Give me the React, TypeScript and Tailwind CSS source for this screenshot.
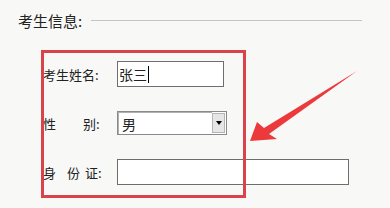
import React from "react";

export default function App() {
  const font = { fontFamily: '"Noto Sans CJK SC", "Noto Sans", sans-serif' };
  return (
    <div
      className="relative w-[390px] h-[208px] overflow-hidden bg-[#f8f8f6] text-[#222]"
      style={font}
    >
      {/* header */}
      <div className="flex items-center h-[40px] pl-[18px] pr-[28px]">
        <span className="text-[15px] leading-none">考生信息:</span>
        <div className="flex-1 h-px bg-[#c4c4c4] ml-[9px]" />
      </div>

      {/* form */}
      <div className="flex flex-col gap-[23px] mt-[21px] pl-[43px] text-[13px]">
        <div className="flex items-center h-[26px]">
          <span className="w-[74px] leading-none">考生姓名:</span>
          <div className="w-[107px] h-[26px] border border-[#6e6e6e] bg-white flex items-center pl-[1px] text-[14px] leading-none">
            张三<span className="w-px h-[17px] bg-black ml-[1px]" />
          </div>
        </div>
        <div className="flex items-center h-[26px]">
          <span className="w-[74px] flex leading-none">
            <span>性</span>
            <span className="ml-[27px]">别:</span>
          </span>
          <div className="w-[110px] h-[24px] border border-[#8a8a8a] bg-white flex items-stretch">
            <div className="flex-1 flex items-center pl-[3px] border-t border-l border-[#b0b0b0] text-[14px] leading-none">男</div>
            <div className="w-[13px] my-[1px] mr-[1px] bg-[#e6e6e6] border border-[#b5b5b5] flex items-center justify-center">
              <div className="w-0 h-0 border-l-[3px] border-r-[3px] border-t-[4px] border-l-transparent border-r-transparent border-t-black" />
            </div>
          </div>
        </div>
        <div className="flex items-center h-[26px]">
          <span className="w-[74px] flex leading-none">
            <span>身</span>
            <span className="ml-[11px]">份</span>
            <span className="ml-[5px]">证:</span>
          </span>
          <div className="w-[232px] h-[26px] border border-[#6e6e6e] bg-white" />
        </div>
      </div>

      {/* red annotation box */}
      <div className="absolute left-[41px] top-[50px] w-[205px] h-[148px] border-[3px] border-[#d9434a]" />

      {/* arrow */}
      <svg className="absolute left-0 top-0" width="390" height="208" viewBox="0 0 390 208">
        <polygon
          points="357,71 269,134 277,139 250,141 257,122 264,128"
          fill="#ec3a3c"
        />
      </svg>
    </div>
  );
}
